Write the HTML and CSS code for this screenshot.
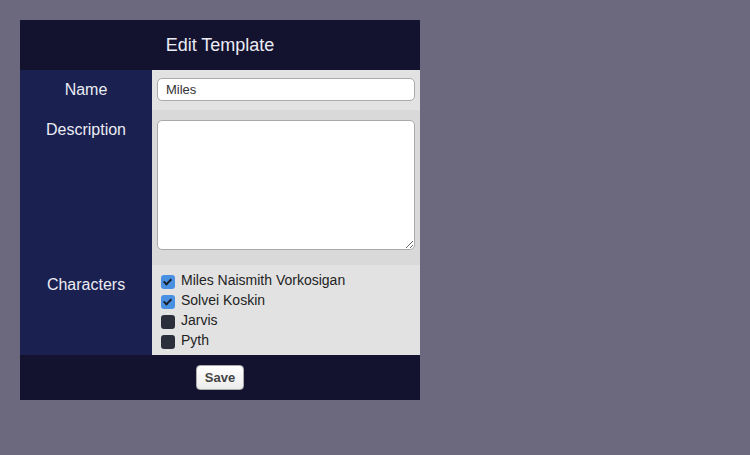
FILE: index.html
```html
<!DOCTYPE html>
<html>
<head>
<meta charset="utf-8">
<link rel="stylesheet" href="styles.css">
</head>
<body>
<div class="panel">
  <div class="header">Edit Template</div>
  <div class="grid">
    <div class="label row-name">Name</div>
    <div class="cell cell-name"><input class="text-input" type="text" value="Miles"></div>
    <div class="label">Description</div>
    <div class="cell cell-desc"><textarea class="textarea"></textarea></div>
    <div class="label">Characters</div>
    <div class="cell cell-chars">
      <label class="check-row"><input class="check" type="checkbox" checked><span>Miles Naismith Vorkosigan</span></label>
      <label class="check-row"><input class="check" type="checkbox" checked><span>Solvei Koskin</span></label>
      <label class="check-row"><input class="check" type="checkbox"><span>Jarvis</span></label>
      <label class="check-row"><input class="check" type="checkbox"><span>Pyth</span></label>
    </div>
  </div>
  <div class="footer"><button class="save">Save</button></div>
</div>
</body>
</html>
```
FILE: styles.css
```css
html, body { margin: 0; padding: 0; }
body {
  background: #6c687e;
  font-family: "Liberation Sans", Arial, sans-serif;
  width: 750px;
  height: 455px;
  overflow: hidden;
}
.panel {
  margin: 20px 0 0 20px;
  width: 400px;
}
.header {
  background: #131330;
  color: #ececf4;
  height: 50px;
  line-height: 50px;
  text-align: center;
  font-size: 18px;
}
.grid {
  display: grid;
  grid-template-columns: 132px 1fr;
}
.label {
  background: #1a2050;
  color: #ececf4;
  font-size: 16px;
  line-height: 18px;
  text-align: center;
  padding-top: 11px;
}
.cell { background: #e2e2e2; }
.cell-name { padding: 8px 5px 9px; height: 23px; }
.text-input {
  box-sizing: border-box;
  display: block;
  width: 258px;
  height: 23px;
  margin: 0;
  border: 1px solid #aaa;
  border-radius: 5px;
  background: #fff;
  padding: 0 8px;
  font-family: "Liberation Sans", Arial, sans-serif;
  font-size: 13px;
  color: #333;
  outline: none;
}
.cell-desc { background: #d9d9d9; padding: 10px 5px 15px; }
.textarea {
  box-sizing: border-box;
  display: block;
  width: 258px;
  height: 130px;
  margin: 0;
  border: 1px solid #aaa;
  border-radius: 5px;
  background: #fff;
  outline: none;
}
.cell-chars { padding: 5px 5px 5px 9px; }
.check-row {
  display: flex;
  align-items: center;
  height: 20px;
  font-size: 14px;
  color: #222;
}
.check {
  appearance: none;
  -webkit-appearance: none;
  width: 14px;
  height: 14px;
  margin: 0 6px 0 0;
  border-radius: 3px;
  background: #2b2f3b;
  position: relative;
  flex: none;
  top: 2px;
}
.check:checked {
  background: #4a90e2;
}
.check:checked::after {
  content: "";
  position: absolute;
  left: 4px;
  top: 2px;
  width: 3px;
  height: 6px;
  border: solid #1a1f2a;
  border-width: 0 2px 2px 0;
  transform: rotate(45deg);
}
.footer {
  background: #131330;
  height: 45px;
  display: flex;
  justify-content: center;
  align-items: center;
}
.save {
  width: 48px;
  height: 25px;
  margin-top: -1px;
  border: 1px solid #aaa;
  border-radius: 4px;
  background: linear-gradient(#ffffff, #ececec);
  font-family: "Liberation Sans", Arial, sans-serif;
  font-weight: bold;
  font-size: 13px;
  color: #444;
  padding: 0;
}
```
